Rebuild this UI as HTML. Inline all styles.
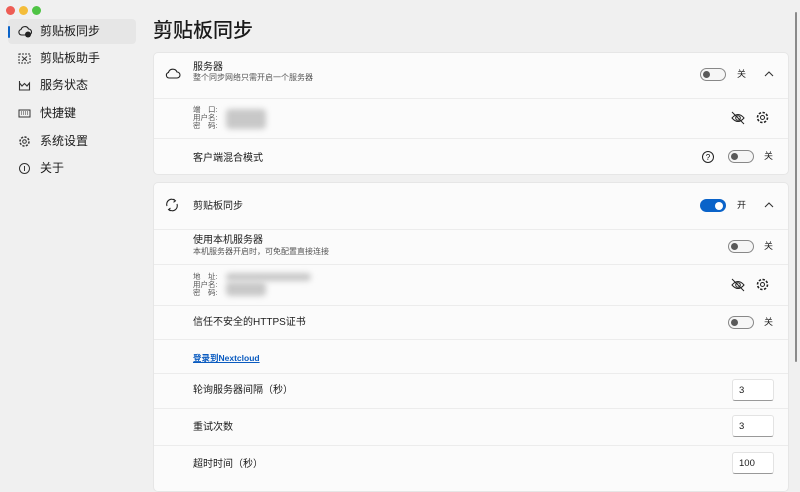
<!DOCTYPE html>
<html><head><meta charset="utf-8"><style>
*{box-sizing:border-box;margin:0;padding:0}
body{width:800px;height:482px;overflow:hidden;background:#f0f0f0;font-family:"Liberation Sans","Noto Sans CJK SC",sans-serif;color:#1b1b1b;position:relative}
.a{position:absolute}
.dot{position:absolute;top:6px;width:9px;height:9px;border-radius:50%}
.nav{position:absolute;left:8px;width:128px;height:25px;font-size:12px;line-height:25px;padding-left:32px}
.nav svg{position:absolute;left:10px;top:6px}
.card{position:absolute;left:153px;width:636px;background:#fbfbfb;border:1px solid #e6e6e6;border-radius:5px;overflow:hidden}
.row{position:absolute;left:0;right:0;border-top:1px solid #ececec}
.t{position:absolute;left:39px;font-size:10px;line-height:12px}
.s{font-size:8px;color:#555}
.sw{position:absolute;width:26px;height:13px;border:1px solid #888;border-radius:7px;background:#f6f6f6}
.sw::after{content:"";position:absolute;left:2px;top:2px;width:7px;height:7px;border-radius:50%;background:#5a5a5a}
.on{background:#0a63c9;border-color:#0a63c9}
.on::after{left:auto;right:2px;background:#fff;width:8px;height:8px;top:1.5px}
.lab{position:absolute;font-size:9px;line-height:12px}
.small{position:absolute;left:39px;font-size:7.5px;color:#555}
.small div{height:8px;line-height:8px;white-space:nowrap}
.blur{position:absolute;background:#c8c8c8;filter:blur(3px);border-radius:4px}
.inp{position:absolute;left:578px;width:42px;height:22px;background:#fff;border:1px solid #e3e3e3;border-bottom:1px solid #999;border-radius:3px;font-size:9.5px;padding:5px 0 0 6px}
</style></head><body>
<div class="dot" style="left:6px;background:#ee5d55"></div>
<div class="dot" style="left:19px;background:#f4bd3a"></div>
<div class="dot" style="left:32px;background:#4fc445"></div>
<div class="a" style="left:795px;top:12px;width:2px;height:350px;background:#8a8a8a;border-radius:1px"></div>

<div class="nav" style="top:19px;background:#e6e6e6;border-radius:4px"><div class="a" style="left:0;top:7px;width:2px;height:12px;background:#0a63c9;border-radius:1px"></div>
<svg width="14" height="13" viewBox="0 0 14 13"><path d="M3.5 10 H10.5 A3 3 0 0 0 10.5 4 A4 4 0 0 0 3 4.5 A2.8 2.8 0 0 0 3.5 10Z" fill="none" stroke="#222" stroke-width="1.1"/><circle cx="10" cy="9.5" r="3" fill="#222"/></svg>剪贴板同步</div>
<div class="nav" style="top:46px"><svg width="13" height="13" viewBox="0 0 13 13"><rect x="1" y="2" width="11" height="9" fill="none" stroke="#333" stroke-dasharray="2 1"/><path d="M4 4.5 L9 9 M9 4.5 L4 9" stroke="#333"/></svg>剪贴板助手</div>
<div class="nav" style="top:73px"><svg width="13" height="13" viewBox="0 0 13 13"><path d="M1.5 2 V11 H11.5 V4 L9 7 L6.5 4.5 L4 7 L1.5 4" fill="none" stroke="#333" stroke-width="1.1"/></svg>服务状态</div>
<div class="nav" style="top:101px"><svg width="13" height="13" viewBox="0 0 13 13"><rect x="1" y="3" width="11" height="7" fill="none" stroke="#333"/><path d="M3 5h7M3 7h7" stroke="#333" stroke-dasharray="1 1"/></svg>快捷键</div>
<div class="nav" style="top:129px"><svg width="13" height="13" viewBox="0 0 13 13"><circle cx="6.5" cy="6.5" r="4.5" fill="none" stroke="#333" stroke-width="1.5" stroke-dasharray="2.2 1.3"/><circle cx="6.5" cy="6.5" r="1.8" fill="none" stroke="#333"/></svg>系统设置</div>
<div class="nav" style="top:156px"><svg width="13" height="13" viewBox="0 0 13 13"><circle cx="6.5" cy="6.5" r="5" fill="none" stroke="#333"/><path d="M6.5 4v5" stroke="#333"/></svg>关于</div>

<div class="a" style="left:153px;top:14px;font-size:20px;font-weight:500">剪贴板同步</div>

<div class="card" style="top:52px;height:123px">
 <svg class="a" style="left:11px;top:14px" width="16" height="14" viewBox="0 0 16 14"><path d="M4 11 H12 A3 3 0 0 0 12 5 A4.5 4.5 0 0 0 3.5 5.5 A2.8 2.8 0 0 0 4 11Z" fill="none" stroke="#222" stroke-width="1.1"/></svg>
 <div class="t" style="top:10px;line-height:10px">服务器<br><span class="s">整个同步网络只需开启一个服务器</span></div>
 <div class="sw" style="left:546px;top:15px"></div><div class="lab" style="left:583px;top:15px">关</div>
 <svg class="a" style="left:610px;top:17px" width="10" height="7"><path d="M1 6 L5 2 L9 6" fill="none" stroke="#333" stroke-width="1.1"/></svg>
 <div class="row" style="top:45px;height:40px">
  <div class="small" style="top:7px"><div>端　口:</div><div>用户名:</div><div>密　码:</div></div>
  <div class="blur" style="left:72px;top:10px;width:40px;height:20px"></div>
  <svg class="a" style="left:576px;top:12px" width="16" height="14" viewBox="0 0 16 14"><path d="M2 7 Q8 0 14 7 Q8 14 2 7Z" fill="none" stroke="#222"/><circle cx="8" cy="7" r="2.3" fill="none" stroke="#222"/><path d="M2 1 L14 13" stroke="#222"/></svg>
  <svg class="a" style="left:601px;top:11px" width="15" height="15" viewBox="0 0 15 15"><circle cx="7.5" cy="7.5" r="5" fill="none" stroke="#222" stroke-width="1.6" stroke-dasharray="2.4 1.5"/><circle cx="7.5" cy="7.5" r="2" fill="none" stroke="#222"/></svg>
 </div>
 <div class="row" style="top:85px;height:38px">
  <div class="t" style="top:14px">客户端混合模式</div>
  <svg class="a" style="left:547px;top:11px" width="14" height="14"><circle cx="7" cy="7" r="5.5" fill="none" stroke="#222"/><text x="7" y="10" font-size="8" text-anchor="middle" font-family="Liberation Sans">?</text></svg>
  <div class="sw" style="left:574px;top:11px"></div><div class="lab" style="left:610px;top:11px">关</div>
 </div>
</div>

<div class="card" style="top:182px;height:310px">
 <svg class="a" style="left:10px;top:14px" width="16" height="16" viewBox="0 0 16 16"><path d="M3 9 A5 5 0 0 1 11 3.5 M13 7 A5 5 0 0 1 5 12.5" fill="none" stroke="#222" stroke-width="1.1"/><path d="M9.5 2 L11.5 3.8 L9.5 5.3 M6.5 11 L4.5 12.6 L6.5 14" fill="none" stroke="#222"/></svg>
 <div class="t" style="top:18px">剪贴板同步</div>
 <div class="sw on" style="left:546px;top:16px"></div><div class="lab" style="left:583px;top:16px">开</div>
 <svg class="a" style="left:610px;top:18px" width="10" height="7"><path d="M1 6 L5 2 L9 6" fill="none" stroke="#333" stroke-width="1.1"/></svg>
 <div class="row" style="top:46px;height:35px">
  <div class="t" style="top:5px;line-height:11px">使用本机服务器<br><span class="s">本机服务器开启时，可免配置直接连接</span></div>
  <div class="sw" style="left:574px;top:10px"></div><div class="lab" style="left:610px;top:10px">关</div>
 </div>
 <div class="row" style="top:81px;height:41px">
  <div class="small" style="top:8px"><div>地　址:</div><div>用户名:</div><div>密　码:</div></div>
  <div class="blur" style="left:72px;top:8px;width:85px;height:8px"></div>
  <div class="blur" style="left:72px;top:17px;width:40px;height:14px"></div>
  <svg class="a" style="left:576px;top:13px" width="16" height="14" viewBox="0 0 16 14"><path d="M2 7 Q8 0 14 7 Q8 14 2 7Z" fill="none" stroke="#222"/><circle cx="8" cy="7" r="2.3" fill="none" stroke="#222"/><path d="M2 1 L14 13" stroke="#222"/></svg>
  <svg class="a" style="left:601px;top:12px" width="15" height="15" viewBox="0 0 15 15"><circle cx="7.5" cy="7.5" r="5" fill="none" stroke="#222" stroke-width="1.6" stroke-dasharray="2.4 1.5"/><circle cx="7.5" cy="7.5" r="2" fill="none" stroke="#222"/></svg>
 </div>
 <div class="row" style="top:122px;height:34px">
  <div class="t" style="top:11px">信任不安全的HTTPS证书</div>
  <div class="sw" style="left:574px;top:10px"></div><div class="lab" style="left:610px;top:10px">关</div>
 </div>
 <div class="row" style="top:156px;height:34px">
  <div class="t" style="top:12px;font-size:8.5px;color:#0a5bc0;text-decoration:underline;font-weight:bold">登录到Nextcloud</div>
 </div>
 <div class="row" style="top:190px;height:35px">
  <div class="t" style="top:11px">轮询服务器间隔（秒）</div><div class="inp" style="top:5px">3</div>
 </div>
 <div class="row" style="top:225px;height:37px">
  <div class="t" style="top:13px">重试次数</div><div class="inp" style="top:6px">3</div>
 </div>
 <div class="row" style="top:262px;height:48px">
  <div class="t" style="top:13px">超时时间（秒）</div><div class="inp" style="top:6px">100</div>
 </div>
</div>
</body></html>
